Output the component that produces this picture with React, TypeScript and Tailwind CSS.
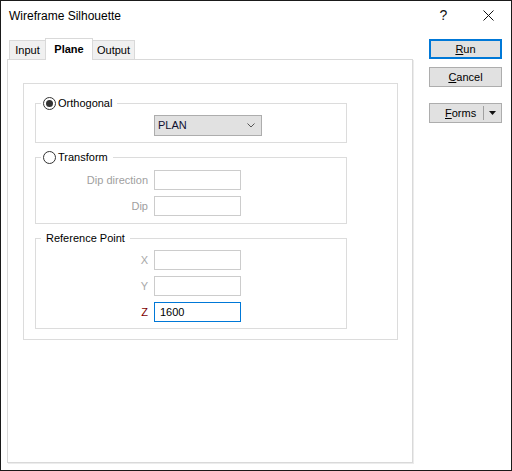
import React from "react";

function Radio({ checked }: { checked?: boolean }) {
  return (
    <span className="w-[13px] h-[13px] rounded-full border border-[#333333] bg-white flex items-center justify-center shrink-0">
      {checked ? <span className="w-[7px] h-[7px] rounded-full bg-[#333333]" /> : null}
    </span>
  );
}

function Field({ label, labelClass, value, focused }: { label: string; labelClass: string; value?: string; focused?: boolean }) {
  return (
    <div className="flex items-center">
      <div className={"w-[112px] text-right " + labelClass}>{label}</div>
      <div
        className={
          "ml-[6px] w-[87px] h-[20px] bg-white flex items-center pl-[5px] " +
          (focused ? "border border-[#0078d7]" : "border border-[#cccccc]")
        }
      >
        {value}
      </div>
    </div>
  );
}

export default function App() {
  return (
    <div className="w-[512px] h-[471px] bg-white border border-[#1a1a1a] flex flex-col font-['Liberation_Sans',Arial,sans-serif] text-[11px] text-black overflow-hidden">
      {/* Title bar */}
      <div className="h-[29px] flex items-center justify-between shrink-0">
        <span className="pl-[8px] text-[12px] text-black">Wireframe Silhouette</span>
        <div className="flex h-full">
          <div className="w-[46px] h-full flex items-center justify-center pl-[3px] text-[14px] text-[#111]">?</div>
          <div className="w-[46px] h-full flex items-center justify-center">
            <svg width="11" height="11" viewBox="0 0 11 11">
              <path d="M0.5 0.5 L10.5 10.5 M10.5 0.5 L0.5 10.5" stroke="#111" strokeWidth="1" />
            </svg>
          </div>
        </div>
      </div>

      {/* Body */}
      <div className="flex pl-[6px] pt-[8px]">
        <div className="flex flex-col">
          {/* Tabs */}
          <div className="flex items-end h-[21px] pl-[2px]">
            <div className="h-[19px] w-[37px] border border-b-0 border-[#d9d9d9] bg-[#f0f0f0] flex items-center justify-center">
              Input
            </div>
            <div className="relative z-10 -ml-px h-[22px] w-[48px] -mb-px border border-b-0 border-[#d9d9d9] bg-white flex items-center justify-center font-bold">
              Plane
            </div>
            <div className="-ml-px h-[19px] w-[43px] border border-b-0 border-[#d9d9d9] bg-[#f0f0f0] flex items-center justify-center">
              Output
            </div>
          </div>

          {/* Panel */}
          <div className="w-[406px] h-[404px] border border-[#d9d9d9] shadow-[1px_1px_0_#ececec]">
            <div className="ml-[15px] mt-[23px] w-[375px] border border-[#dcdcdc] pb-[10px]">
              {/* Orthogonal */}
              <div className="ml-[11px] mt-[19px] w-[312px] border border-[#dcdcdc] pb-[6px]">
                <div className="-mt-[9px] ml-[5px] w-fit h-[16px] flex items-center bg-white pl-[2px] pr-[5px] gap-[2px]">
                  <Radio checked />
                  <span>Orthogonal</span>
                </div>
                <div className="ml-[118px] mt-[4px] w-[108px] h-[21px] border border-[#adadad] bg-[#e1e1e1] flex items-center justify-between pl-[3px] pr-[6px] text-[#101030]">
                  <span>PLAN</span>
                  <svg width="8" height="5" viewBox="0 0 8 5">
                    <path d="M0.5 0.5 L4 4 L7.5 0.5" stroke="#555" strokeWidth="1" fill="none" />
                  </svg>
                </div>
              </div>

              {/* Transform */}
              <div className="ml-[11px] mt-[14px] w-[312px] border border-[#dcdcdc] pb-[7px]">
                <div className="-mt-[9px] ml-[5px] w-fit h-[16px] flex items-center bg-white pl-[2px] pr-[5px] gap-[2px]">
                  <Radio />
                  <span>Transform</span>
                </div>
                <div className="mt-[5px] flex flex-col gap-[6px]">
                  <Field label="Dip direction" labelClass="text-[#a0a0a0]" />
                  <Field label="Dip" labelClass="text-[#a0a0a0]" />
                </div>
              </div>

              {/* Reference Point */}
              <div className="ml-[11px] mt-[14px] w-[312px] border border-[#dcdcdc] pb-[6px]">
                <div className="-mt-[9px] ml-[5px] w-fit h-[16px] flex items-center bg-white px-[5px]">
                  <span>Reference Point</span>
                </div>
                <div className="mt-[4px] flex flex-col gap-[6px]">
                  <Field label="X" labelClass="text-[#a8a8a8]" />
                  <Field label="Y" labelClass="text-[#a8a8a8]" />
                  <Field label="Z" labelClass="text-[#800000]" value="1600" focused />
                </div>
              </div>
            </div>
          </div>
        </div>

        {/* Buttons */}
        <div className="ml-[16px] mt-[1px] flex flex-col">
          <div className="w-[73px] h-[20px] border-2 border-[#0078d7] bg-[#e1e1e1] flex items-center justify-center">
            <span>
              <span className="underline">R</span>un
            </span>
          </div>
          <div className="mt-[8px] w-[73px] h-[20px] border border-[#adadad] bg-[#e1e1e1] flex items-center justify-center">
            <span>
              <span className="underline">C</span>ancel
            </span>
          </div>
          <div className="mt-[16px] w-[73px] h-[20px] border border-[#adadad] bg-[#e1e1e1] flex items-center">
            <span className="ml-[15px]">
              <span className="underline">F</span>orms
            </span>
            <span className="ml-[7px] w-px h-[14px] bg-[#a0a0a0]" />
            <span className="flex-1 flex items-center justify-center">
              <svg width="7" height="4" viewBox="0 0 7 4">
                <path d="M0 0 L7 0 L3.5 4 Z" fill="#111" />
              </svg>
            </span>
          </div>
        </div>
      </div>
    </div>
  );
}
